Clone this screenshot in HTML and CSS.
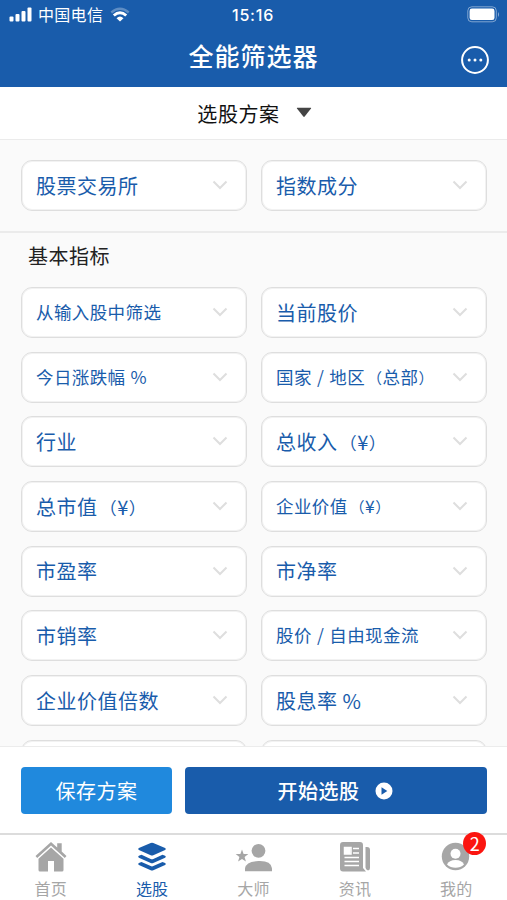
FILE: index.html
```html
<!DOCTYPE html>
<html lang="zh-CN">
<head>
<meta charset="utf-8">
<meta name="viewport" content="width=device-width">
<title>全能筛选器</title>
<link rel="stylesheet" href="styles.css">
</head>
<body>
<svg width="0" height="0" class="defs"><symbol id="chev" viewBox="0 0 16 10"><path d="M1.500 1.500 8 8l6.500-6.500" fill="none" stroke="#dedede" stroke-width="2"/></symbol></svg>
<header class="header">
  <div class="status">
    <div class="carrier">
      <svg width="24" height="16" viewBox="0 0 24 16" fill="#fff"><rect x=".5" y="9.500" width="4" height="5" rx="1"/><rect x="6.500" y="7" width="4" height="7.500" rx="1"/><rect x="12.500" y="4" width="4" height="10.500" rx="1"/><rect x="18.500" y=".5" width="4" height="14" rx="1"/></svg>
      <span class="operator">中国电信</span>
      <svg width="20" height="16" viewBox="0 0 20 16" fill="none" stroke="#fff" stroke-width="2.400"><path d="M1.300 5.500Q10-1.800 18.700 5.500" opacity=".3"/><path d="M3.800 8.500Q10 3 16.200 8.500" stroke-width="3"/><path d="M6.500 11.200Q10 8 13.500 11.200L10 14.500Z" fill="#fff" stroke="none"/></svg>
    </div>
    <span class="time">15:16</span>
    <svg class="battery" width="33" height="17" viewBox="0 0 33 17"><rect x=".8" y=".8" width="28.500" height="15" rx="4" fill="none" stroke="#fff" stroke-opacity=".45"/><rect x="2.600" y="2.600" width="24.900" height="11.400" rx="2.300" fill="#fff"/><path d="M31 6v5q2-2.500 0-5" fill="#fff" opacity=".5"/></svg>
  </div>
  <div class="titlebar">
    <h1>全能筛选器</h1>
    <svg class="more" width="30" height="30" viewBox="0 0 30 30"><circle cx="15" cy="15" r="12.900" fill="none" stroke="#fff" stroke-width="2"/><g fill="#fff"><circle cx="9.200" cy="15" r="1.500"/><circle cx="15" cy="15" r="1.500"/><circle cx="20.800" cy="15" r="1.500"/></g></svg>
  </div>
</header>
<div class="plan"><span>选股方案</span><svg width="16" height="11" viewBox="0 0 16 11"><path d="M1.300.8h13.400q.8 0 .3.800L8.700 9.500q-.7.800-1.400 0L1 1.600q-.5-.8.300-.8" fill="#444"/></svg></div>
<main class="filters">
  <section class="grid top">
    <div class="field"><span>股票交易所</span><svg><use href="#chev"/></svg></div>
    <div class="field"><span>指数成分</span><svg><use href="#chev"/></svg></div>
  </section>
  <h2>基本指标</h2>
  <section class="grid">
    <div class="field small"><span>从输入股中筛选</span><svg><use href="#chev"/></svg></div>
    <div class="field"><span>当前股价</span><svg><use href="#chev"/></svg></div>
    <div class="field small"><span>今日涨跌幅 %</span><svg><use href="#chev"/></svg></div>
    <div class="field small"><span>国家 / 地区<i class="open">（</i>总部<i>）</i></span><svg><use href="#chev"/></svg></div>
    <div class="field"><span>行业</span><svg><use href="#chev"/></svg></div>
    <div class="field"><span>总收入<i class="open">（</i>¥<i>）</i></span><svg><use href="#chev"/></svg></div>
    <div class="field"><span>总市值<i class="open">（</i>¥<i>）</i></span><svg><use href="#chev"/></svg></div>
    <div class="field small"><span>企业价值<i class="open">（</i>¥<i>）</i></span><svg><use href="#chev"/></svg></div>
    <div class="field"><span>市盈率</span><svg><use href="#chev"/></svg></div>
    <div class="field"><span>市净率</span><svg><use href="#chev"/></svg></div>
    <div class="field"><span>市销率</span><svg><use href="#chev"/></svg></div>
    <div class="field small"><span>股价 / 自由现金流</span><svg><use href="#chev"/></svg></div>
    <div class="field"><span>企业价值倍数</span><svg><use href="#chev"/></svg></div>
    <div class="field"><span>股息率 %</span><svg><use href="#chev"/></svg></div>
    <div class="field"></div>
    <div class="field"></div>
  </section>
</main>
<div class="actions">
  <button class="save">保存方案</button>
  <button class="start"><span>开始选股</span><svg width="18" height="18" viewBox="0 0 18 18"><circle cx="9" cy="9" r="8.500" fill="#fff"/><path d="M6.500 5.300v7.400L12.300 9z" fill="#195cab"/></svg></button>
</div>
<nav class="tabs">
  <div class="tab"><svg width="34" height="32" viewBox="0 0 34 32" fill="#a6a6a6"><path d="M17 1 1.500 15l1.700 2L17 4.600 30.800 17l1.700-2-4.800-4.400V2.300h-4.500v4.200z"/><path d="M17 6.500 4.500 17.700V29q0 1.500 1.500 1.500h8V20h6v10.500h8q1.500 0 1.500-1.500V17.700z"/></svg><span>首页</span></div>
  <div class="tab active"><svg width="34" height="32" viewBox="0 0 34 32" fill="#195cab"><path d="M15.700 2.100q1.300-.6 2.600 0l11.800 5q1.600.9 0 1.900l-11.800 5.200q-1.300.6-2.600 0L3.900 9q-1.600-1 0-1.900z"/><path id="layer" d="M3.900 14.800 6.500 13.700l9.200 4.200q1.300.6 2.600 0l9.200-4.200 2.600 1.100q1.600 1 0 1.900L18.300 22q-1.300.6-2.600 0L3.900 16.700q-1.600-.9 0-1.900"/><use href="#layer" y="7.200"/></svg><span>选股</span></div>
  <div class="tab"><svg width="40" height="32" viewBox="0 0 40 32" fill="#a6a6a6"><circle cx="25.500" cy="9.800" r="6.900"/><path d="M12 30.300v-3Q13 20.500 25.500 20T39 27.300v3z"/><path d="m9 8.500 1.600 4.400 4.700.2-3.700 2.900 1.300 4.500L9 17.900l-3.900 2.600L6.400 16l-3.700-2.900 4.700-.2z"/></svg><span>大师</span></div>
  <div class="tab"><svg width="34" height="32" viewBox="0 0 34 32"><path d="M5 1h17q3 0 3 3v23l3 3.500H5q-3 0-3-3V4q0-3 3-3m24 5q3 0 3 3v18q0 2-2 2.500-2.500-1-2.500-3V6z" fill="#a6a6a6"/><path d="M6.500 6.500H13V13H6.500zM15 7.500h6m-6 4.500h6M6.500 16.500H21M6.500 20.500H21M6.500 24.500H21" fill="none" stroke="#fff" stroke-width="1.500"/><path d="M7 6h5.500v7H7z" fill="#fff"/></svg><span>资讯</span></div>
  <div class="tab"><div class="avatar"><svg width="34" height="32" viewBox="0 0 34 32"><circle cx="16.500" cy="15.500" r="13.700" fill="#a6a6a6"/><circle cx="16.500" cy="12.800" r="5" fill="#fff"/><path d="M8 23.500q2-4.500 8.500-4.500t8.500 4.500q-3.500 3.300-8.500 3.300T8 23.500" fill="#fff"/></svg><b class="badge">2</b></div><span>我的</span></div>
</nav>
</body>
</html>
```

FILE: styles.css
```css
* { box-sizing: border-box; }
body {
  margin: 0;
  height: 900px;
  overflow: hidden;
  display: flex;
  flex-direction: column;
  background: #fff;
  font-family: "Noto Sans CJK SC", sans-serif;
}
.defs { position: absolute; }
svg { display: block; flex: none; }
.header { flex: none; height: 87px; background: #195cab; color: #fff; }
.status {
  height: 29px;
  display: grid;
  grid-template-columns: 1fr auto 1fr;
  align-items: center;
  padding: 0 7px 0 9px;
}
.carrier { display: flex; align-items: center; }
.operator { font-size: 16px; line-height: 20px; letter-spacing: .3px; margin: -1px 7px 0 5px; }
.time { font: 500 16px/20px Inter, sans-serif; letter-spacing: .8px; margin: 1px 1px 0 -2px; }
.battery { justify-self: end; margin-top: -1px; }
.titlebar {
  height: 58px;
  display: grid;
  grid-template-columns: 1fr auto 1fr;
  align-items: center;
  padding: 0 17px;
}
h1 { grid-column: 2; margin: -6px 0 0; font-size: 25px; line-height: 36px; font-weight: 500; letter-spacing: 1px; }
.more { justify-self: end; margin: 3px 0 0; }
.plan {
  flex: none;
  height: 53px;
  display: flex;
  align-items: center;
  justify-content: center;
  gap: 16px;
  border-bottom: 1px solid #ebebeb;
  color: #111;
  font-size: 20px;
  letter-spacing: .6px;
  padding-left: 2px;
}
.plan svg { margin-top: -2px; }
.filters { flex: 1; min-height: 0; overflow: hidden; background: #fafafa; }
.grid {
  display: grid;
  grid-template-columns: 1fr 1fr;
  gap: 13.700px 14px;
  padding: 0 20px 0 21px;
}
.top { padding-top: 20px; padding-bottom: 20px; border-bottom: 2px solid #ebebeb; }
h2 { margin: 0; padding-left: 28px; height: 54px; font-size: 20px; line-height: 46px; font-weight: 400; letter-spacing: .5px; color: #222; }
.field {
  height: 51px;
  display: flex;
  align-items: center;
  justify-content: space-between;
  padding: 0 18px 0 14px;
  background: #fff;
  border: 1px solid #dedede;
  box-shadow: inset 0 0 0 1px #f2f2f2;
  border-radius: 11px;
  color: #195cab;
  font-size: 20px;
  letter-spacing: .5px;
  white-space: nowrap;
}
.field span { margin-top: -1px; }
.field svg { width: 16px; height: 10px; margin-top: -1px; }
.field i { font-style: normal; font-size: .86em; }
.open { margin-left: 2px; }
.small { font-size: 17.500px; letter-spacing: .4px; word-spacing: .8px; }
.small span { margin-top: -2px; }
.actions {
  flex: none;
  height: 87px;
  display: flex;
  gap: 13px;
  padding: 20px 20px 0 21px;
  border-top: 1px solid #ececec;
}
button {
  height: 47px;
  border: 0;
  border-radius: 4px;
  padding: 0;
  display: flex;
  align-items: center;
  justify-content: center;
  gap: 15px;
  color: #fff;
  font: 400 20px "Noto Sans CJK SC", sans-serif;
  letter-spacing: .5px;
}
.save { width: 151px; background: #2089dd; }
.start { flex: 1; background: #195cab; font-weight: 500; padding-right: 2px; }
.tabs {
  flex: none;
  height: 67px;
  display: grid;
  grid-template-columns: repeat(5, 1fr);
  border-top: 2px solid #dcdcdc;
}
.tab {
  display: flex;
  flex-direction: column;
  align-items: center;
  padding-top: 6px;
  color: #a6a6a6;
  font-size: 16px;
  line-height: 22px;
  letter-spacing: .2px;
}
.tab > span { margin-top: 4px; }
.active { color: #195cab; }
.avatar { position: relative; }
.badge {
  position: absolute;
  left: 24px;
  top: -9px;
  width: 23px;
  height: 23px;
  border-radius: 50%;
  background: #fb1510;
  color: #fff;
  font: 400 18px/22px "Noto Sans CJK SC", sans-serif;
  text-align: center;
}
```
